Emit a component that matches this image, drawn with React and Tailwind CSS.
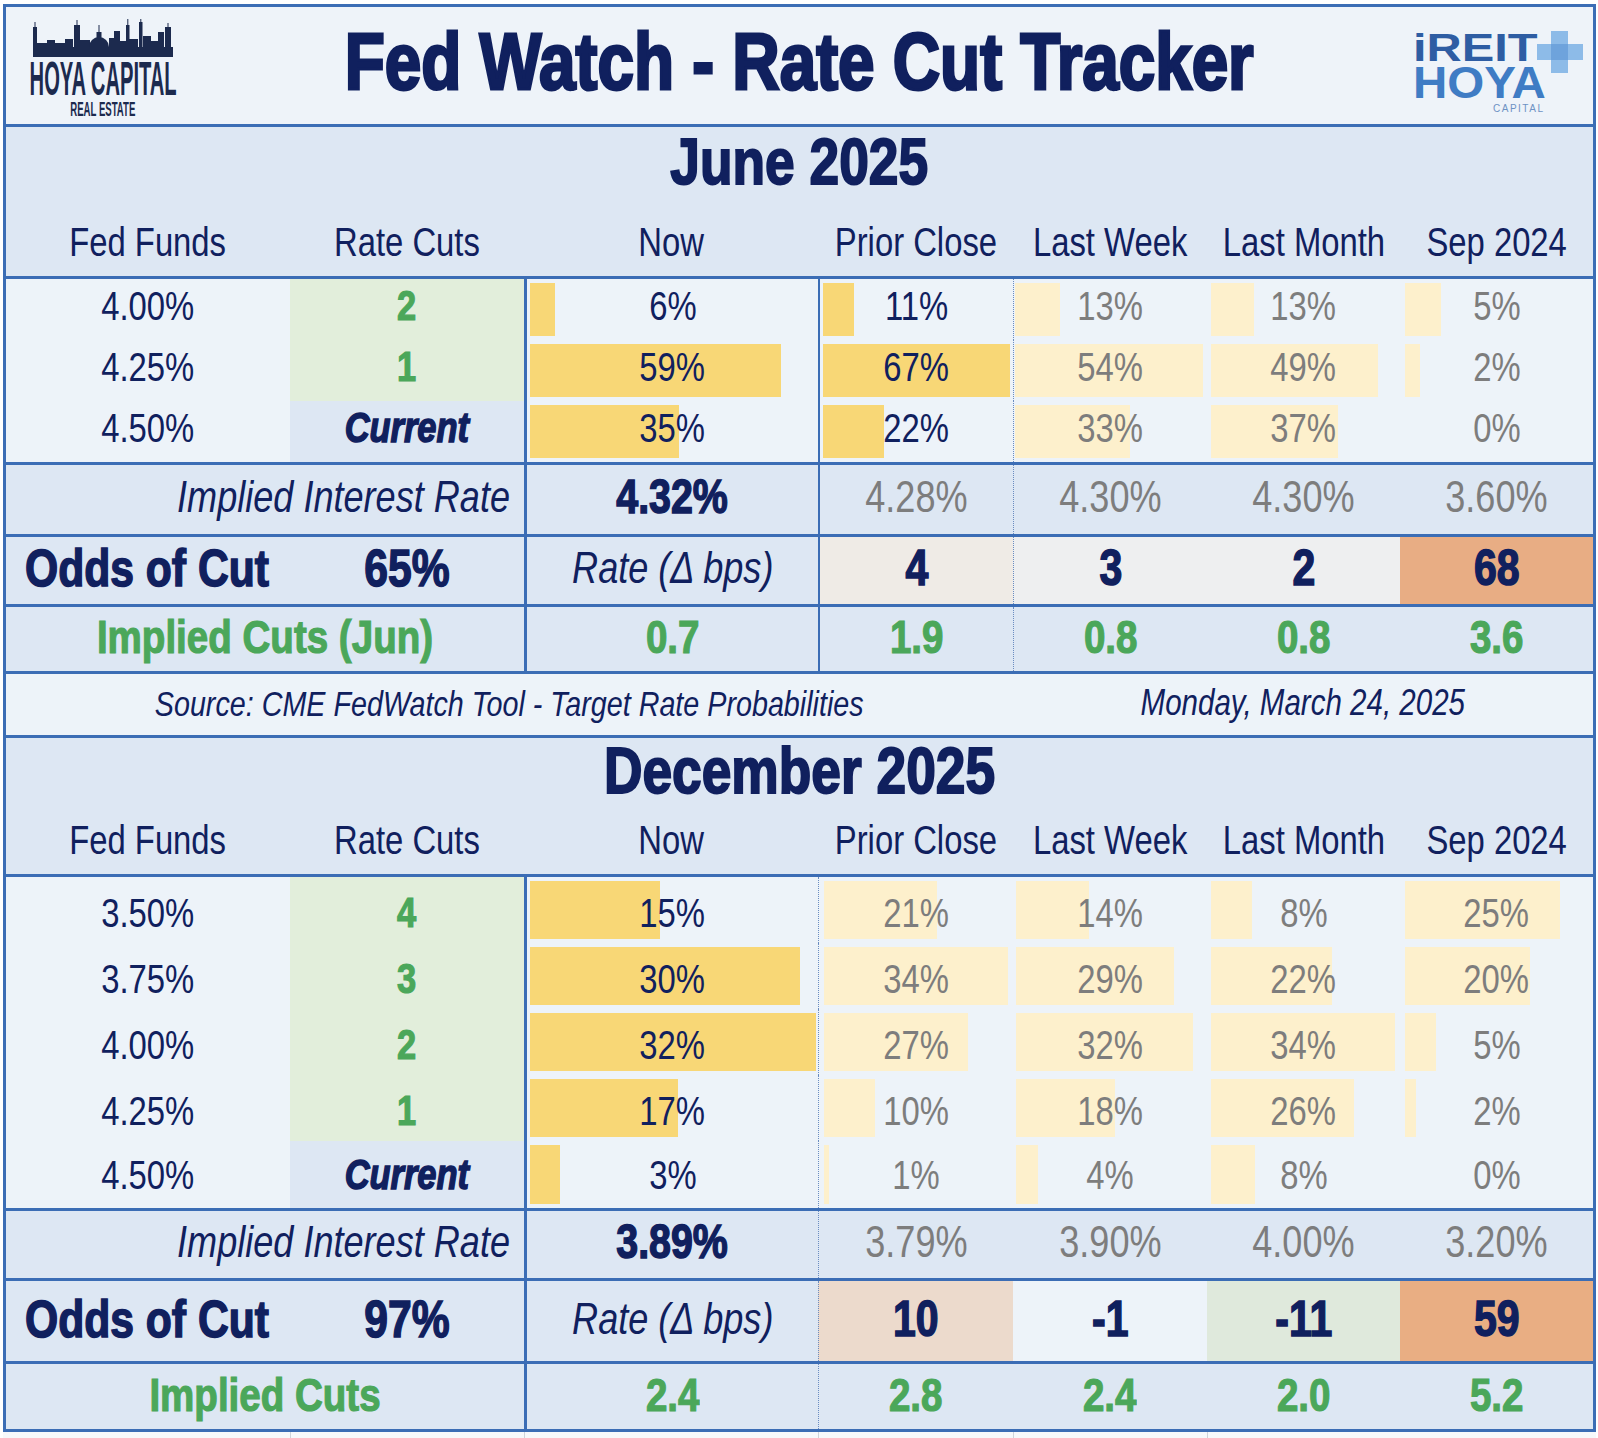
import React from "react";

const GRID = "grid grid-cols-[284px_234px_294px_195px_194px_193px_193px]";

const junRows = [
  { rate: "4.00%", cut: "2", cells: [["6%", 25], ["11%", 31], ["13%", 45], ["13%", 43], ["5%", 36]] },
  { rate: "4.25%", cut: "1", cells: [["59%", 251], ["67%", 187], ["54%", 188], ["49%", 167], ["2%", 15]] },
  { rate: "4.50%", cut: "Current", cells: [["35%", 149], ["22%", 61], ["33%", 115], ["37%", 127], ["0%", 0]] },
];

const decRows = [
  { rate: "3.50%", cut: "4", cells: [["15%", 130], ["21%", 113], ["14%", 73], ["8%", 41], ["25%", 155]] },
  { rate: "3.75%", cut: "3", cells: [["30%", 270], ["34%", 184], ["29%", 158], ["22%", 121], ["20%", 125]] },
  { rate: "4.00%", cut: "2", cells: [["32%", 286], ["27%", 144], ["32%", 177], ["34%", 184], ["5%", 31]] },
  { rate: "4.25%", cut: "1", cells: [["17%", 148], ["10%", 51], ["18%", 99], ["26%", 143], ["2%", 11]] },
  { rate: "4.50%", cut: "Current", cells: [["3%", 30], ["1%", 5], ["4%", 22], ["8%", 44], ["0%", 0]] },
];

const NAVY = "text-[#10205e]";
const GRAY = "text-[#7d7d7d]";

const junCols = [
  { cell: "border-l-[3px] border-[#3b6db5]", bar: "left-[3px] bg-[#f8d776]", text: NAVY },
  { cell: "border-l-[2px] border-[#3b6db5]", bar: "left-[3px] bg-[#f8d776]", text: NAVY },
  { cell: "border-l border-dotted border-[#6a8cc0]", bar: "left-[1px] bg-[#fdf0cc]", text: GRAY },
  { cell: "", bar: "left-[4px] bg-[#fdf0cc]", text: GRAY },
  { cell: "", bar: "left-[5px] bg-[#fdf0cc]", text: GRAY },
];

const decCols = [
  { cell: "border-l-[3px] border-[#3b6db5]", bar: "left-[3px] bg-[#f8d776]", text: NAVY },
  { cell: "border-l border-dotted border-[#6a8cc0]", bar: "left-[5px] bg-[#fdf0cc]", text: GRAY },
  { cell: "", bar: "left-[3px] bg-[#fdf0cc]", text: GRAY },
  { cell: "", bar: "left-[4px] bg-[#fdf0cc]", text: GRAY },
  { cell: "", bar: "left-[5px] bg-[#fdf0cc]", text: GRAY },
];

const HEAVY_NAVY = "font-bold text-[#10205e] [-webkit-text-stroke:1.5px_#10205e]";
const HEAVY_GREEN = "font-bold text-[#4ba75a] [-webkit-text-stroke:1.2px_#4ba75a]";

/* condensed text: Liberation Sans narrowed to Arial-Narrow proportions */
function T({ c = "", o = "origin-center", children }) {
  return <span className={`inline-block whitespace-nowrap leading-none scale-x-[0.82] ${o} ${c}`}>{children}</span>;
}

function Skyline() {
  return (
    <svg width="140" height="38" viewBox="0 0 140 38" fill="#1c2a4e">
      <rect x="0" y="28" width="140" height="10" />
      <rect x="0" y="8" width="4" height="20" />
      <rect x="1.5" y="3" width="1" height="6" />
      <rect x="4" y="24" width="10" height="4" />
      <rect x="14" y="21" width="8" height="7" />
      <rect x="22" y="24" width="10" height="4" />
      <rect x="32" y="20" width="8" height="8" />
      <rect x="41" y="6" width="6" height="22" />
      <rect x="43.5" y="1" width="1" height="6" />
      <rect x="47" y="21" width="10" height="7" />
      <path d="M56 28 A10 10 0 0 1 76 28 Z" />
      <rect x="63.5" y="13" width="5" height="8" />
      <rect x="65.5" y="6" width="1" height="8" />
      <rect x="76" y="19" width="5" height="9" />
      <rect x="81" y="12" width="6" height="16" />
      <rect x="87" y="22" width="6" height="6" />
      <rect x="93" y="6" width="3.5" height="22" />
      <rect x="94.3" y="0" width="1" height="7" />
      <rect x="96" y="20" width="9" height="8" />
      <rect x="106" y="3" width="3.5" height="25" />
      <rect x="107.3" y="0" width="1" height="4" />
      <rect x="110" y="17" width="8" height="11" />
      <rect x="118" y="22" width="7" height="6" />
      <rect x="125" y="13" width="6" height="15" />
      <rect x="132" y="8" width="6" height="20" />
      <rect x="134.5" y="4" width="1" height="5" />
    </svg>
  );
}

function HoyaLogo() {
  return (
    <div className="flex flex-col items-center w-[148px] ml-[23px] self-start mt-[12px]">
      <Skyline />
      <div className="h-[44px] w-full flex items-center justify-center">
        <span className="inline-block whitespace-nowrap text-[48px] leading-[36px] font-bold scale-x-[0.42] text-[#1c2a4e]">
          HOYA CAPITAL
        </span>
      </div>
      <div className="h-[16px] w-full flex items-center justify-center">
        <span className="inline-block whitespace-nowrap text-[20px] leading-[14px] font-bold scale-x-[0.48] text-[#1c2a4e]">
          REAL ESTATE
        </span>
      </div>
    </div>
  );
}

function IreitLogo() {
  return (
    <div className="relative ml-[80px] w-[175px] h-[100px] self-start mt-[24px]">
      <svg className="absolute left-[124px] top-[0px]" width="46" height="42" viewBox="0 0 46 42">
        <rect x="14" y="0" width="17" height="42" fill="#8dbbe8" />
        <rect x="0" y="13" width="46" height="16" fill="#8dbbe8" />
        <rect x="14" y="13" width="17" height="16" fill="#6ea3dc" />
      </svg>
      <div className="relative h-[34px] flex items-center">
        <span className="inline-block origin-left scale-x-[1.25] text-[39px] leading-[30px] font-bold text-[#2e5da3]">iREIT</span>
      </div>
      <div className="relative h-[36px] flex items-center">
        <span className="inline-block origin-left scale-x-[1.08] text-[44px] leading-[32px] font-bold text-[#3f7cc4]">HOYA</span>
      </div>
      <div className="relative mt-[3px] pl-[80px] text-[10px] leading-[10px] tracking-[1.5px] text-[#6d92c4]">CAPITAL</div>
    </div>
  );
}

function ColumnHeaders({ cls }) {
  const labels = ["Fed Funds", "Rate Cuts", "Now", "Prior Close", "Last Week", "Last Month", "Sep 2024"];
  return (
    <div className={`${GRID} ${cls}`}>
      {labels.map((l) => (
        <div key={l} className="flex items-center justify-center">
          <T c={`text-[40px] ${NAVY}`}>{l}</T>
        </div>
      ))}
    </div>
  );
}

function DataRow({ row, cols, h, pad }) {
  const isCurrent = row.cut === "Current";
  return (
    <div className={`${GRID} ${h}`}>
      <div className={`flex items-center justify-center ${pad}`}>
        <T c={`text-[40px] ${NAVY}`}>{row.rate}</T>
      </div>
      <div className={`flex items-center justify-center ${pad} ${isCurrent ? "bg-[#dde7f3]" : "bg-[#e2eedb]"}`}>
        {isCurrent ? (
          <T c={`text-[42px] italic ${HEAVY_NAVY}`}>Current</T>
        ) : (
          <T c={`text-[42px] ${HEAVY_GREEN}`}>{row.cut}</T>
        )}
      </div>
      {row.cells.map(([t, w], i) => (
        <div key={i} className={`relative flex items-center justify-center ${pad} ${cols[i].cell}`}>
          {w > 0 && <div className={`absolute top-[4px] bottom-[4px] ${cols[i].bar}`} style={{ width: w }} />}
          <T c={`relative text-[40px] ${cols[i].text}`}>{t}</T>
        </div>
      ))}
    </div>
  );
}

function ImpliedRow({ now, others, cols, h, pad }) {
  return (
    <div className={`${GRID} ${h} border-b-[3px] border-[#3b6db5] bg-[#dde7f3]`}>
      <div className={`col-span-2 flex items-center justify-end pr-[14px] ${pad}`}>
        <T o="origin-right" c={`text-[44px] italic ${NAVY}`}>Implied Interest Rate</T>
      </div>
      <div className={`flex items-center justify-center ${pad} ${cols[0].cell}`}>
        <T c={`text-[48px] ${HEAVY_NAVY}`}>{now}</T>
      </div>
      {others.map((v, i) => (
        <div key={i} className={`flex items-center justify-center ${pad} ${cols[i + 1].cell}`}>
          <T c={`text-[44px] ${GRAY}`}>{v}</T>
        </div>
      ))}
    </div>
  );
}

function OddsRow({ odds, vals, bgs, cols, h, pad }) {
  return (
    <div className={`${GRID} ${h} border-b-[3px] border-[#3b6db5] bg-[#dde7f3]`}>
      <div className={`flex items-center pl-[19px] ${pad}`}>
        <T o="origin-left" c={`text-[52px] ${HEAVY_NAVY}`}>Odds of Cut</T>
      </div>
      <div className={`flex items-center justify-center ${pad}`}>
        <T c={`text-[52px] ${HEAVY_NAVY}`}>{odds}</T>
      </div>
      <div className={`flex items-center justify-center ${pad} ${cols[0].cell}`}>
        <T c={`text-[44px] italic ${NAVY}`}>Rate (Δ bps)</T>
      </div>
      {vals.map((v, i) => (
        <div key={i} className={`flex items-center justify-center ${pad} ${bgs[i]} ${cols[i + 1].cell}`}>
          <T c={`text-[50px] ${HEAVY_NAVY}`}>{v}</T>
        </div>
      ))}
    </div>
  );
}

function CutsRow({ label, vals, cols, h, border, pad }) {
  return (
    <div className={`${GRID} ${h} ${border} bg-[#dde7f3]`}>
      <div className={`col-span-2 flex items-center justify-center ${pad}`}>
        <T c={`text-[47px] ${HEAVY_GREEN}`}>{label}</T>
      </div>
      {vals.map((v, i) => (
        <div key={i} className={`flex items-center justify-center ${pad} ${cols[i].cell}`}>
          <T c={`text-[47px] ${HEAVY_GREEN}`}>{v}</T>
        </div>
      ))}
    </div>
  );
}

export default function App() {
  return (
    <div className="w-[1598px] h-[1438px] bg-white overflow-hidden [font-family:'Liberation_Sans',Arial,sans-serif]">
      <div className="mt-[4px] ml-[3px] w-[1593px] border-[3px] border-[#3b6db5]">
        {/* Header */}
        <div className="h-[120px] border-b-[3px] border-[#3b6db5] bg-[#eef3f9] grid grid-cols-[260px_minmax(0,1fr)_260px] items-center">
          <HoyaLogo />
          <div className="-mt-[14px] flex justify-center">
            <T c="text-[80px] font-bold text-[#10205e] [-webkit-text-stroke:3px_#10205e]">Fed Watch - Rate Cut Tracker</T>
          </div>
          <IreitLogo />
        </div>

        {/* June header */}
        <div className="h-[152px] border-b-[3px] border-[#3b6db5] bg-[#dde7f3]">
          <div className="h-[68px] flex items-center justify-center">
            <T c={`text-[65px] ${HEAVY_NAVY} [-webkit-text-stroke:2px_#10205e]`}>June 2025</T>
          </div>
          <ColumnHeaders cls="h-[81px] pt-[12px]" />
        </div>

        {/* June data */}
        <div className="border-b-[3px] border-[#3b6db5] bg-[#edf3f9]">
          {junRows.map((r) => (
            <DataRow key={r.rate} row={r} cols={junCols} h="h-[61px]" pad="pb-[7px]" />
          ))}
        </div>

        <ImpliedRow now="4.32%" others={["4.28%", "4.30%", "4.30%", "3.60%"]} cols={junCols} h="h-[72px]" pad="pb-[6px]" />
        <OddsRow
          odds="65%"
          vals={["4", "3", "2", "68"]}
          bgs={["bg-[#efebe6]", "bg-[#eeeff0]", "bg-[#eeeff0]", "bg-[#e8ad84]"]}
          cols={junCols}
          h="h-[70px]"
          pad="pb-[6px]"
        />
        <CutsRow
          label="Implied Cuts (Jun)"
          vals={["0.7", "1.9", "0.8", "0.8", "3.6"]}
          cols={junCols}
          h="h-[67px]"
          border="border-b-[3px] border-[#3b6db5]"
          pad="pb-[6px]"
        />

        {/* Source row */}
        <div className={`${GRID} h-[64px] border-b-[3px] border-[#3b6db5] bg-[#edf3f9]`}>
          <div className="col-span-4 flex items-center justify-center pb-[3px]">
            <T c={`text-[35px] italic ${NAVY}`}>Source: CME FedWatch Tool - Target Rate Probabilities</T>
          </div>
          <div className="col-span-3 flex items-center justify-center pb-[3px]">
            <T c={`text-[36px] italic ${NAVY}`}>Monday, March 24, 2025</T>
          </div>
        </div>

        {/* December header */}
        <div className="h-[139px] border-b-[3px] border-[#3b6db5] bg-[#dde7f3]">
          <div className="h-[64px] flex items-center justify-center">
            <T c={`text-[65px] ${HEAVY_NAVY} [-webkit-text-stroke:2px_#10205e]`}>December 2025</T>
          </div>
          <ColumnHeaders cls="h-[72px] pt-[4px]" />
        </div>

        {/* December data */}
        <div className="border-b-[3px] border-[#3b6db5] bg-[#edf3f9]">
          {decRows.map((r, i) => (
            <DataRow
              key={r.rate}
              row={r}
              cols={decCols}
              h={i === 4 ? "h-[67px]" : "h-[66px]"}
              pad={i === 4 ? "" : "pt-[5px]"}
            />
          ))}
        </div>

        <ImpliedRow now="3.89%" others={["3.79%", "3.90%", "4.00%", "3.20%"]} cols={decCols} h="h-[70px]" pad="pb-[5px]" />
        <OddsRow
          odds="97%"
          vals={["10", "-1", "-11", "59"]}
          bgs={["bg-[#ecdacc]", "bg-[#edf3f9]", "bg-[#dfe9dc]", "bg-[#e9ae83]"]}
          cols={decCols}
          h="h-[83px]"
          pad="pb-[5px]"
        />
        <CutsRow label="Implied Cuts" vals={["2.4", "2.8", "2.4", "2.0", "5.2"]} cols={decCols} h="h-[65px]" border="" pad="pb-[5px]" />
      </div>

      {/* faint gridlines below table */}
      <div className="ml-[3px] w-[1593px] h-[6px] bg-[#f7f9fb] grid grid-cols-[287px_234px_294px_195px_194px_193px_196px]">
        <div />
        <div className="border-l border-[#cfd4da]" />
        <div className="border-l border-[#cfd4da]" />
        <div className="border-l border-[#cfd4da]" />
        <div className="border-l border-[#cfd4da]" />
        <div className="border-l border-[#cfd4da]" />
        <div />
      </div>
    </div>
  );
}
